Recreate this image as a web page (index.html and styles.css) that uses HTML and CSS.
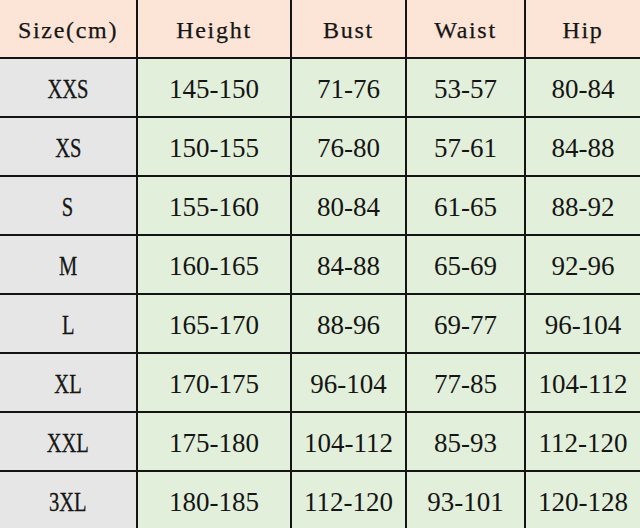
FILE: index.html
```html
<!DOCTYPE html>
<html>
<head>
<meta charset="utf-8">
<link rel="stylesheet" href="styles.css">
</head>
<body>
<div class="chart">
  <div class="cell head">Size(cm)</div>
  <div class="cell head">Height</div>
  <div class="cell head">Bust</div>
  <div class="cell head">Waist</div>
  <div class="cell head">Hip</div>

  <div class="cell size"><span>XXS</span></div>
  <div class="cell data">145-150</div>
  <div class="cell data">71-76</div>
  <div class="cell data">53-57</div>
  <div class="cell data">80-84</div>

  <div class="cell size"><span>XS</span></div>
  <div class="cell data">150-155</div>
  <div class="cell data">76-80</div>
  <div class="cell data">57-61</div>
  <div class="cell data">84-88</div>

  <div class="cell size"><span>S</span></div>
  <div class="cell data">155-160</div>
  <div class="cell data">80-84</div>
  <div class="cell data">61-65</div>
  <div class="cell data">88-92</div>

  <div class="cell size"><span>M</span></div>
  <div class="cell data">160-165</div>
  <div class="cell data">84-88</div>
  <div class="cell data">65-69</div>
  <div class="cell data">92-96</div>

  <div class="cell size"><span>L</span></div>
  <div class="cell data">165-170</div>
  <div class="cell data">88-96</div>
  <div class="cell data">69-77</div>
  <div class="cell data">96-104</div>

  <div class="cell size"><span>XL</span></div>
  <div class="cell data">170-175</div>
  <div class="cell data">96-104</div>
  <div class="cell data">77-85</div>
  <div class="cell data">104-112</div>

  <div class="cell size"><span>XXL</span></div>
  <div class="cell data">175-180</div>
  <div class="cell data">104-112</div>
  <div class="cell data">85-93</div>
  <div class="cell data">112-120</div>

  <div class="cell size"><span>3XL</span></div>
  <div class="cell data">180-185</div>
  <div class="cell data">112-120</div>
  <div class="cell data">93-101</div>
  <div class="cell data">120-128</div>
</div>
</body>
</html>
```

FILE: styles.css
```css
html, body {
  margin: 0;
  padding: 0;
  width: 640px;
  height: 528px;
  overflow: hidden;
  background: #e2efda;
}

.chart {
  display: grid;
  grid-template-columns: 136px 152px 113px 117px 114px;
  grid-auto-rows: 57px;
  gap: 2px;
  background: #141414;
  width: 640px;
  color: #151515;
  font-family: "Liberation Serif", "Times New Roman", serif;
}

.cell {
  display: flex;
  align-items: center;
  justify-content: center;
  padding-top: 4px;
  box-sizing: border-box;
  white-space: nowrap;
}

.head {
  background: #fce4d6;
  font-size: 24px;
  letter-spacing: 1.7px;
  -webkit-text-stroke: 0.25px #151515;
}

.size {
  background: #e6e6e6;
  font-size: 27px;
}

.size span {
  display: inline-block;
  transform: scaleX(0.76);
  -webkit-text-stroke: 0.3px #151515;
}

.data {
  background: #e2efda;
  font-size: 27px;
}
```
